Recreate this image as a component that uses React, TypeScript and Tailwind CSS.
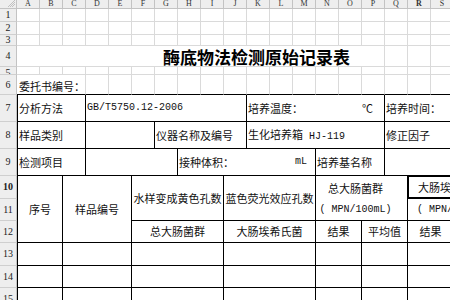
import type { ReactNode } from "react";

const COLS = "ABCDEFGHIJKLMNOPQRS".split("");

// gridline helpers (side-specific colours so they never fight each other)
const light = "border-r border-b border-r-[#dadada] border-b-[#dadada]";
const dark = "border-r border-b border-r-black border-b-black";
const topEdge = "border-r border-b border-r-[#dadada] border-b-black";

const Mono = ({ children }: { children: ReactNode }) => (
  <span className="font-['Liberation_Mono',monospace] text-[10px]">{children}</span>
);

const RowHead = ({ n, bold = false, top = false }: { n: number; bold?: boolean; top?: boolean }) => (
  <div
    className={`flex justify-center overflow-hidden bg-[#eeeeee] border-r border-b border-r-[#c3c3c3] border-b-[#cfcfcf] font-['Liberation_Serif',serif] text-[10px] leading-none text-[#222] ${
      top ? "items-start pt-[1px]" : "items-center"
    } ${bold ? "font-bold" : ""}`}
  >
    {n}
  </div>
);

const EmptyRow = ({ n, top = false }: { n: number; top?: boolean }) => (
  <>
    <RowHead n={n} top={top} />
    {COLS.map((c) => (
      <div key={c} className={light} />
    ))}
  </>
);

const DataRow = ({ n }: { n: number }) => (
  <>
    <RowHead n={n} />
    <div className={`col-span-2 ${dark} border-l border-l-black`} />
    <div className={`col-span-3 ${dark}`} />
    <div className={`col-span-4 ${dark}`} />
    <div className={`col-span-4 ${dark}`} />
    <div className={`col-span-2 ${dark}`} />
    <div className={`col-span-2 ${dark}`} />
    <div className={`col-span-2 ${dark}`} />
  </>
);

export default function App() {
  return (
    <div className="w-[450px] h-[300px] overflow-hidden bg-white text-[#111] font-['Noto_Sans_CJK_SC',sans-serif] text-[11px] leading-none">
      <div className="grid w-max grid-cols-[17px_repeat(19,23px)] grid-rows-[9px_13px_13px_11px_21px_8px_20px_27px_27px_27px_23px_22px_22px_23px_22px_23px] whitespace-nowrap">
        {/* column headers */}
        <div className="relative bg-[#eeeeee] border-r border-b border-r-[#c3c3c3] border-b-[#c3c3c3]">
          <svg className="absolute right-[1px] bottom-[1px]" width="8" height="7" viewBox="0 0 8 7">
            <path d="M8 0 L1 7 M8 2 L3 7 M8 4 L5 7" stroke="#b5b5b5" strokeWidth="0.8" fill="none" />
          </svg>
        </div>
        {COLS.map((c) => (
          <div
            key={c}
            className={`flex items-center justify-center bg-[#eeeeee] border-r border-b border-r-[#c3c3c3] border-b-[#c3c3c3] font-['Liberation_Serif',serif] text-[8px] leading-none text-[#333] ${
              c === "R" ? "font-bold" : ""
            }`}
          >
            {c}
          </div>
        ))}

        <EmptyRow n={1} />
        <EmptyRow n={2} />
        <EmptyRow n={3} />

        {/* row 4: title */}
        <RowHead n={4} />
        <div className={`col-span-16 ${light} flex items-center pl-[146px] text-[17px] font-bold text-black`}>
          酶底物法检测原始记录表
        </div>
        <div className={light} />
        <div className={light} />
        <div className={light} />

        <EmptyRow n={5} top />

        {/* row 6 */}
        <RowHead n={6} />
        <div className={`col-span-3 ${topEdge} flex items-end pb-[2px] pl-[2px]`}>委托书编号：</div>
        {COLS.slice(3).map((c) => (
          <div key={c} className={topEdge} />
        ))}

        {/* row 7 */}
        <RowHead n={7} />
        <div className={`col-span-3 ${dark} border-l border-l-black flex items-center pl-[1px]`}>分析方法</div>
        <div className={`col-span-7 ${dark} flex items-center pl-[1px]`}>
          <Mono>GB/T5750.12-2006</Mono>
        </div>
        <div className={`col-span-6 ${dark} flex items-center justify-between pl-[1px] pr-[11px]`}>
          <span>培养温度：</span>
          <span>℃</span>
        </div>
        <div className={`col-span-3 ${dark} flex items-center pl-[1px]`}>培养时间：</div>

        {/* row 8 */}
        <RowHead n={8} />
        <div className={`col-span-3 ${dark} border-l border-l-black flex items-center pl-[1px]`}>样品类别</div>
        <div className={`col-span-3 ${dark}`} />
        <div className={`col-span-4 ${dark} flex items-center pl-[1px]`}>仪器名称及编号</div>
        <div className={`col-span-6 ${dark} flex items-center pl-[1px]`}>
          <span>
            生化培养箱<Mono>{" HJ-119"}</Mono>
          </span>
        </div>
        <div className={`col-span-3 ${dark} flex items-center pl-[1px]`}>修正因子</div>

        {/* row 9 */}
        <RowHead n={9} />
        <div className={`col-span-3 ${dark} border-l border-l-black flex items-center pl-[1px]`}>检测项目</div>
        <div className={`col-span-4 ${dark}`} />
        <div className={`col-span-6 ${dark} flex items-center justify-between pl-[1px] pr-[8px]`}>
          <span>接种体积：</span>
          <Mono>mL</Mono>
        </div>
        <div className={`col-span-3 ${dark} flex items-center pl-[1px]`}>培养基名称</div>
        <div className={`col-span-3 ${dark}`} />

        {/* rows 10-12: table header */}
        <RowHead n={10} bold />
        <div className={`col-span-2 row-span-3 ${dark} border-l border-l-black flex items-center justify-center`}>序号</div>
        <div className={`col-span-3 row-span-3 ${dark} flex items-center justify-center`}>样品编号</div>
        <div className={`col-span-4 row-span-2 ${dark} flex items-center justify-center`}>水样变成黄色孔数</div>
        <div className={`col-span-4 row-span-2 ${dark} flex items-center justify-center`}>蓝色荧光效应孔数</div>
        <div className="col-span-4 border-r border-r-black flex items-center justify-center pr-[12px] pt-[1px]">总大肠菌群</div>
        <div className="relative col-span-2 flex items-center pl-[10px]">
          大肠埃希氏菌
          <div className="absolute -top-[1px] -left-[1px] -right-[1px] bottom-[0px] border-2 border-black" />
        </div>

        <RowHead n={11} />
        <div className={`col-span-4 ${dark} flex items-center justify-center pr-[12px]`}>
          <Mono>( MPN/100mL)</Mono>
        </div>
        <div className={`col-span-2 ${dark} flex items-center pl-[9px]`}>
          <Mono>( MPN/100mL)</Mono>
        </div>

        <RowHead n={12} />
        <div className={`col-span-4 ${dark} flex items-center justify-center`}>总大肠菌群</div>
        <div className={`col-span-4 ${dark} flex items-center justify-center`}>大肠埃希氏菌</div>
        <div className={`col-span-2 ${dark} flex items-center justify-center`}>结果</div>
        <div className={`col-span-2 ${dark} flex items-center justify-center`}>平均值</div>
        <div className={`col-span-2 ${dark} flex items-center justify-center`}>结果</div>

        <DataRow n={13} />
        <DataRow n={14} />
        <DataRow n={15} />
      </div>
    </div>
  );
}
